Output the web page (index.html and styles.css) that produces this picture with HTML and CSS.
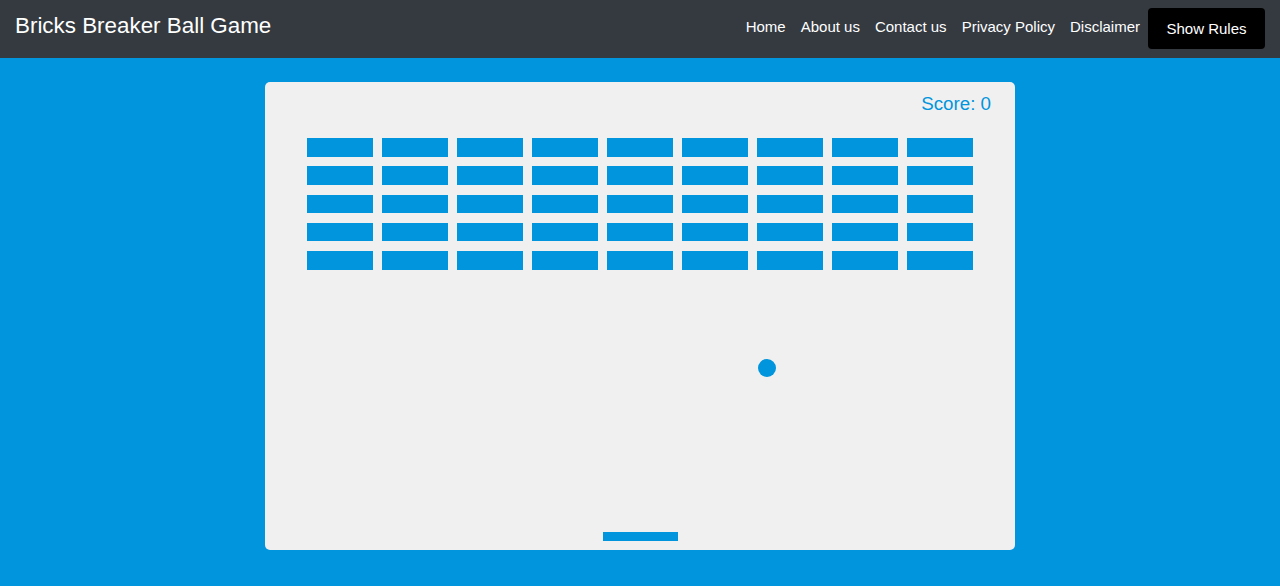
FILE: index.html
```html
<!DOCTYPE html>
<html lang="en">
<head>
<meta charset="utf-8">
<title>Bricks Breaker Ball Game</title>
<link rel="stylesheet" href="styles.css">
</head>
<body>
<header class="topbar">
  <h1 class="brand">Bricks Breaker Ball Game</h1>
  <nav class="nav">
    <a href="#" class="nav-link">Home</a>
    <a href="#" class="nav-link">About us</a>
    <a href="#" class="nav-link">Contact us</a>
    <a href="#" class="nav-link">Privacy Policy</a>
    <a href="#" class="nav-link">Disclaimer</a>
    <button class="rules-btn" type="button">Show Rules</button>
  </nav>
</header>
<main class="stage">
  <div class="board">
    <div class="score">Score: 0</div>
    <div class="bricks">
      <span class="brick"></span><span class="brick"></span><span class="brick"></span><span class="brick"></span><span class="brick"></span><span class="brick"></span><span class="brick"></span><span class="brick"></span><span class="brick"></span>
      <span class="brick"></span><span class="brick"></span><span class="brick"></span><span class="brick"></span><span class="brick"></span><span class="brick"></span><span class="brick"></span><span class="brick"></span><span class="brick"></span>
      <span class="brick"></span><span class="brick"></span><span class="brick"></span><span class="brick"></span><span class="brick"></span><span class="brick"></span><span class="brick"></span><span class="brick"></span><span class="brick"></span>
      <span class="brick"></span><span class="brick"></span><span class="brick"></span><span class="brick"></span><span class="brick"></span><span class="brick"></span><span class="brick"></span><span class="brick"></span><span class="brick"></span>
      <span class="brick"></span><span class="brick"></span><span class="brick"></span><span class="brick"></span><span class="brick"></span><span class="brick"></span><span class="brick"></span><span class="brick"></span><span class="brick"></span>
    </div>
    <div class="ball"></div>
    <div class="paddle"></div>
  </div>
</main>
</body>
</html>
```
FILE: styles.css
```css
* { box-sizing: border-box; }

html, body {
  margin: 0;
  padding: 0;
  height: 100%;
}

body {
  background: #0095dd;
  font-family: "Liberation Sans", Arial, sans-serif;
  overflow: hidden;
}

.topbar {
  display: flex;
  justify-content: space-between;
  align-items: flex-start;
  height: 58px;
  padding: 0 15px;
  background: #343a40;
}

.brand {
  margin: 0;
  padding-top: 13px;
  font-size: 22.4px;
  font-weight: normal;
  line-height: 26px;
  color: #ffffff;
}

.nav {
  display: flex;
  align-items: flex-start;
  padding-top: 8px;
}

.nav-link {
  margin-right: 15px;
  padding-top: 10px;
  font-size: 15px;
  line-height: 18px;
  color: #ffffff;
  text-decoration: none;
}

.nav-link:nth-child(5) {
  margin-right: 8px;
}

.rules-btn {
  width: 117px;
  height: 41px;
  border: 0;
  border-radius: 4px;
  background: #000000;
  color: #ffffff;
  font-family: "Liberation Sans", Arial, sans-serif;
  font-size: 15px;
  padding: 0 0 1px 0;
  cursor: pointer;
}

.stage {
  display: flex;
  justify-content: center;
  padding-top: 24px;
}

.board {
  position: relative;
  width: 750px;
  height: 468px;
  background: #f0f0f0;
  border-radius: 5px;
}

.score {
  height: 56.25px;
  padding-top: 13px;
  padding-right: 24px;
  text-align: right;
  font-size: 18.75px;
  line-height: 18.75px;
  color: #0095dd;
}

.bricks {
  display: grid;
  grid-template-columns: repeat(9, 65.625px);
  grid-auto-rows: 18.75px;
  gap: 9.375px;
  padding-left: 42.1875px;
}

.brick {
  display: block;
  background: #0095dd;
}

.ball {
  position: absolute;
  left: 492.5px;
  top: 276.5px;
  width: 18.75px;
  height: 18.75px;
  border-radius: 50%;
  background: #0095dd;
}

.paddle {
  position: absolute;
  left: 337.5px;
  top: 450px;
  width: 75px;
  height: 9.375px;
  background: #0095dd;
}
```
